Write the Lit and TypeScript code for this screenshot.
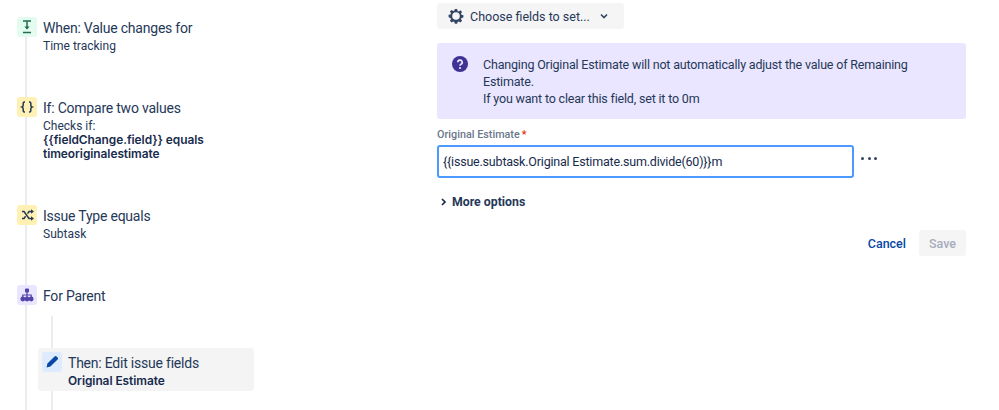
import { LitElement, html, css, svg } from "lit";
import { customElement } from "lit/decorators.js";

const icons = {
  when: svg`<path d="M6 4h8M6 15.500h8" stroke="#216e4e" stroke-width="1.500"/><path d="M10 4v8" stroke="#216e4e" stroke-width="1.500"/><path d="M7.400 9.400h5.200L10 12.600z" fill="#216e4e"/>`,
  ifv: svg`<path d="M8 5h-.6C6.400 5 6.200 5.500 6.200 6.300v2C6.200 9.200 5.800 9.700 5 10c.8.300 1.200.8 1.200 1.700v2c0 .8.200 1.300 1.200 1.300H8M12 5h.6c1 0 1.200.5 1.200 1.300v2c0 .9.400 1.400 1.200 1.700-.8.300-1.200.8-1.200 1.700v2c0 .8-.2 1.300-1.200 1.300H12" fill="none" stroke="#253858" stroke-width="1.500"/>`,
  shuffle: svg`<path d="M5 6.500h2l5 7h2.500M5 13.500h2l1.600-2.200M10.600 8.700 12 6.500h2.500" fill="none" stroke="#253858" stroke-width="1.500"/><path d="M14 4.300 17 6.500 14 8.700zM14 11.300l3 2.200-3 2.200z" fill="#253858"/>`,
  tree: svg`<g fill="#5243aa"><rect x="8" y="3.500" width="4" height="4" rx="1"/><circle cx="5.800" cy="14" r="2.400"/><circle cx="10" cy="14" r="2.400"/><circle cx="14.200" cy="14" r="2.400"/></g><path d="M10 7v5M5.800 12v-2h8.400v2" fill="none" stroke="#5243aa" stroke-width="1.200"/>`,
  pencil: svg`<path d="M12.600 4.400a1.400 1.400 0 0 1 2 0l1 1a1.400 1.400 0 0 1 0 2L8.400 14.600 4.600 15.400l.8-3.800z" fill="#0747a6"/>`,
};

@customElement("app-root")
export class AppRoot extends LitElement {
  static styles = css`
    :host {
      display: block;
      width: 999px;
      height: 410px;
      overflow: hidden;
      background: #fff;
      font-family: Roboto, "Liberation Sans", sans-serif;
      color: #253858;
    }
    .page {
      display: grid;
      grid-template-columns: 437px 529px;
      height: 410px;
    }
    .flow {
      position: relative;
      padding: 17px 0 0 17px;
    }
    .line {
      position: absolute;
      width: 2px;
      background: #ebecf0;
    }
    .main-line { left: 25px; top: 36px; bottom: 0; }
    .sub-line { left: 51px; top: 316px; bottom: 0; }
    .step {
      position: relative;
      display: flex;
      gap: 6px;
    }
    .s1 { height: 80px; }
    .s2 { height: 108px; }
    .s3 { height: 80px; }
    .s4 { height: 63px; }
    .ico {
      flex: none;
      width: 20px;
      height: 20px;
      border-radius: 3px;
      display: block;
    }
    .green { background: #e3fcef; }
    .yellow { background: #fff0b3; }
    .purple { background: #eae6ff; }
    .blue { background: #deebff; }
    .title {
      font-size: 14px;
      line-height: 20px;
      margin-top: 1px;
      letter-spacing: -0.22px;
    }
    .sub {
      font-size: 12px;
      line-height: 14px;
      margin-top: 1px;
    }
    b {
      font-family: Inter, "Liberation Sans", sans-serif;
      font-weight: 600;
      letter-spacing: -0.05px;
      font-size: 11.900px;
      color: #172b4d;
    }
    .then {
      position: relative;
      margin-left: 21px;
      width: 216px;
      height: 43px;
      box-sizing: border-box;
      padding: 4px 4px;
      background: #f4f4f5;
      border-radius: 3px;
      display: flex;
      gap: 6px;
    }
    .then .title { margin-top: 1px; }
    .then .sub { margin-top: 1px; }
    .right { padding-top: 3px; }
    .choose {
      width: 187px;
      height: 26px;
      box-sizing: border-box;
      background: #f5f5f6;
      border-radius: 3px;
      display: flex;
      align-items: center;
      padding-left: 11px;
      font-size: 12.500px;
      gap: 6px;
    }
    .gear-hole { fill: #f5f5f6; }
    .chev { margin-left: 3px; }
    .banner {
      margin-top: 14px;
      height: 76px;
      box-sizing: border-box;
      background: #eae6ff;
      border-radius: 3px;
      padding: 13px 15px;
      display: flex;
      gap: 15px;
      font-size: 12.500px;
      letter-spacing: -0.18px;
      line-height: 17px;
    }
    .banner svg { flex: none; }
    .banner-text { width: 470px; }
    .label {
      margin-top: 9px;
      font-size: 10.800px;
      line-height: 13px;
      font-weight: 500;
      color: #6b778c;
    }
    .req { color: #de350b; margin-left: 2px; }
    .field-row {
      margin-top: 4px;
      display: flex;
      align-items: center;
      gap: 7px;
    }
    .input {
      width: 417px;
      height: 33px;
      box-sizing: border-box;
      border: 2px solid #4c9aff;
      border-radius: 3px;
      padding-left: 4px;
      display: flex;
      align-items: center;
      font-size: 12.500px;
      letter-spacing: -0.2px;
      color: #172b4d;
    }
    .dots { display: flex; gap: 2px; margin-top: -6px; }
    .dots i { width: 3px; height: 3px; border-radius: 50%; background: #344563; margin-right: 1.500px; }
    .more {
      margin-top: 16px;
      display: flex;
      align-items: center;
      gap: 4px;
      font-size: 12.300px;
      line-height: 16px;
      font-weight: 700;
      padding-left: 3px;
    }
    .actions {
      margin-top: 20px;
      display: flex;
      justify-content: flex-end;
      align-items: center;
      gap: 13px;
      font-size: 12.500px;
      font-weight: 500;
    }
    .cancel { color: #0747a6; }
    .save {
      width: 47px;
      height: 26px;
      background: #f5f5f6;
      color: #a5adba;
      border-radius: 3px;
      display: flex;
      align-items: center;
      justify-content: center;
    }
  `;

  private ico(cls: string, body: unknown) {
    return html`<svg class="ico ${cls}" viewBox="0 0 20 20">${body}</svg>`;
  }

  render() {
    return html`
      <div class="page">
        <div class="flow">
          <div class="line main-line"></div>
          <div class="line sub-line"></div>
          <div class="step s1">
            ${this.ico("green", icons.when)}
            <div>
              <div class="title">When: Value changes for</div>
              <div class="sub">Time tracking</div>
            </div>
          </div>
          <div class="step s2">
            ${this.ico("yellow", icons.ifv)}
            <div>
              <div class="title">If: Compare two values</div>
              <div class="sub">Checks if:<br /><b>{{fieldChange.field}} equals<br />timeoriginalestimate</b></div>
            </div>
          </div>
          <div class="step s3">
            ${this.ico("yellow", icons.shuffle)}
            <div>
              <div class="title">Issue Type equals</div>
              <div class="sub">Subtask</div>
            </div>
          </div>
          <div class="step s4">
            ${this.ico("purple", icons.tree)}
            <div><div class="title">For Parent</div></div>
          </div>
          <div class="then">
            ${this.ico("blue", icons.pencil)}
            <div>
              <div class="title">Then: Edit issue fields</div>
              <div class="sub"><b>Original Estimate</b></div>
            </div>
          </div>
        </div>
        <div class="right">
          <div class="choose">
            <svg width="16" height="16" viewBox="0 0 16 16">
              <path d="M6.800 1h2.400l.4 1.900 1.200.5 1.600-1.100 1.700 1.700-1.100 1.600.5 1.200 1.900.4v2.400l-1.900.4-.5 1.200 1.100 1.600-1.700 1.700-1.600-1.100-1.200.5-.4 1.900H6.800l-.4-1.900-1.200-.5-1.600 1.100-1.700-1.700 1.100-1.600-.5-1.200L.6 9.200V6.800l1.900-.4.5-1.200-1.100-1.600 1.700-1.700 1.600 1.100 1.200-.5z" fill="#344563"/>
              <circle class="gear-hole" cx="8" cy="8" r="3.800"/>
            </svg>
            <span>Choose fields to set...</span>
            <svg class="chev" width="10" height="10" viewBox="0 0 10 10"><path d="M2 3.500l3 3 3-3" fill="none" stroke="#344563" stroke-width="1.600"/></svg>
          </div>
          <div class="banner">
            <svg width="16" height="16" viewBox="0 0 16 16">
              <circle cx="8" cy="8" r="8" fill="#403294"/>
              <path d="M5.800 6.300A2.200 2.200 0 1 1 8.900 8.300C8.300 8.600 8 9 8 9.700" fill="none" stroke="#eae6ff" stroke-width="1.700"/>
              <circle cx="8" cy="12" r="1.100" fill="#eae6ff"/>
            </svg>
            <div class="banner-text">
              Changing Original Estimate will not automatically adjust the value of Remaining Estimate.<br />
              If you want to clear this field, set it to 0m
            </div>
          </div>
          <div class="label">Original Estimate<span class="req">*</span></div>
          <div class="field-row">
            <div class="input">{{issue.subtask.Original Estimate.sum.divide(60)}}m</div>
            <div class="dots"><i></i><i></i><i></i></div>
          </div>
          <div class="more">
            <svg width="8" height="10" viewBox="0 0 8 10"><path d="M2 2l3 3-3 3" fill="none" stroke="#172b4d" stroke-width="1.700"/></svg>
            <span>More options</span>
          </div>
          <div class="actions">
            <span class="cancel">Cancel</span>
            <span class="save">Save</span>
          </div>
        </div>
      </div>
    `;
  }
}
